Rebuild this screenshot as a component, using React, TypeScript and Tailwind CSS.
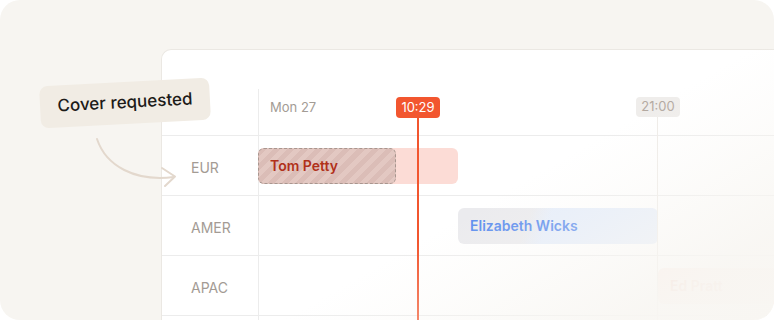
import React from "react";

const rows = ["EUR", "AMER", "APAC", ""];

export default function App() {
  return (
    <div className="relative w-[774px] h-[320px] overflow-hidden rounded-[20px] bg-[#f7f5f1] font-['Inter',sans-serif]">
      <div className="relative ml-[161px] mt-[49px] w-[680px] h-[320px] bg-white rounded-tl-[10px] border-l border-t border-[#ebe8e3]">
        <div className="flex h-[85px]">
          <div className="w-[96px] shrink-0" />
          <div className="flex-1 mt-[39px] border-l border-[#ececec] pl-[11px] pt-[8px] text-[13px] leading-[20px] text-[#a39c95]">
            Mon 27
          </div>
        </div>
        {rows.map((r, i) => (
          <div key={i} className="flex h-[60px] border-t border-[#ececec]">
            <div className="w-[96px] shrink-0 pl-[29px] pt-[3px] flex items-center text-[14px] text-[#a39b94]">
              {r}
            </div>
            <div className="flex-1 min-w-0 border-l border-[#ececec] flex items-center overflow-visible">
              {i === 0 && (
                <div className="relative -ml-px shrink-0 w-[200px] h-[36px] rounded-[6px] bg-[#fcdcd6]">
                  <div className="absolute left-0 top-0 w-[138px] h-[36px] rounded-[6px] border border-dashed border-[#a8968f] bg-[repeating-linear-gradient(135deg,#dbbdb7_0px,#dbbdb7_5px,#e3c8c2_5px,#e3c8c2_10px)] flex items-center pl-[11px] text-[14px] font-semibold text-[#b1311a]">
                    Tom Petty
                  </div>
                </div>
              )}
              {i === 1 && (
                <div className="ml-[199px] shrink-0 w-[200px] h-[36px] rounded-[6px] bg-[linear-gradient(110deg,#ebebee_0%,#ebebee_35%,#e6eefb_45%,#e6eefb_100%)] flex items-center pl-[12px] text-[14px] font-semibold text-[#5a8cee]">
                  Elizabeth Wicks
                </div>
              )}
              {i === 2 && (
                <div className="ml-[399px] shrink-0 w-[200px] h-[36px] rounded-[6px] bg-[#fdeee9] flex items-center pl-[12px] text-[14px] font-semibold text-[#efc4b6]">
                  Ed Pratt
                </div>
              )}
            </div>
          </div>
        ))}

        {/* 21:00 marker */}
        <div className="absolute left-[495px] top-[67px] w-px h-[300px] bg-[#eeebe7]" />
        <div className="absolute left-[474px] top-[47px] w-[44px] h-[20px] rounded-[4px] bg-[#efedeb] flex items-center justify-center text-[13px] text-[#b3a9a1]">
          21:00
        </div>

        {/* now marker */}
        <div className="absolute left-[255px] top-[67px] w-[2px] h-[300px] bg-[#f2562f]" />
        <div className="absolute left-[234px] top-[47px] w-[44px] h-[21px] rounded-[4px] bg-[#f2562f] flex items-center justify-center text-[13px] text-white">
          10:29
        </div>
      </div>

      {/* fade */}
      <div className="pointer-events-none absolute inset-0 bg-[linear-gradient(150deg,rgba(248,246,242,0)_63%,rgba(248,246,242,0.3)_73%,rgba(248,246,242,0.9)_89%,#f8f6f2_100%)]" />

      {/* arrow */}
      <svg className="absolute left-0 top-0" width="774" height="320" viewBox="0 0 774 320" fill="none">
        <path d="M97 139 C 106 166, 135 182, 174 177" stroke="#e3d8cd" strokeWidth="2" strokeLinecap="round" fill="none" />
        <path d="M162 168 L175 176.5 L165 186" stroke="#e3d8cd" strokeWidth="2" strokeLinecap="round" strokeLinejoin="round" fill="none" />
      </svg>

      {/* sticker */}
      <div className="absolute left-[40px] top-[82px] w-[170px] h-[42px] -rotate-3 rounded-[8px] bg-[#f1ece4] flex items-center justify-center text-[17px] font-medium text-[#1d1b19]">
        Cover requested
      </div>
    </div>
  );
}
